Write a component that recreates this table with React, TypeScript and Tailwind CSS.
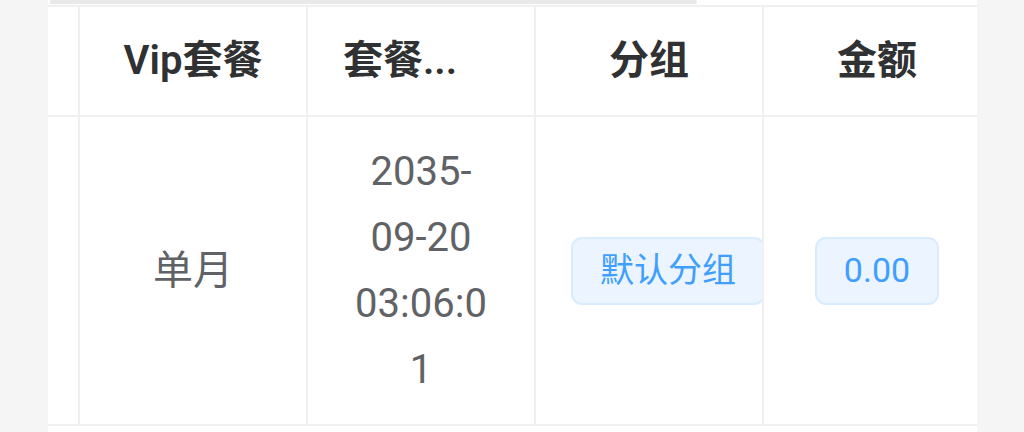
import React from "react";

const line = "border-[#f0f0f0]";

function Tag({ children }: { children: React.ReactNode }) {
  return (
    <span className="inline-flex h-[68px] shrink-0 items-center whitespace-nowrap rounded-[11px] border-2 border-[#d9ecff] bg-[#ecf5ff] px-[27px] text-[34px] text-[#409eff]">
      {children}
    </span>
  );
}

export default function App() {
  const font = { fontFamily: 'Roboto, "Noto Sans CJK SC", sans-serif' };

  return (
    <div className="flex h-[432px] w-full overflow-hidden bg-[#f5f5f5] pl-[48px]" style={font}>
      <div className="flex w-[929px] flex-col overflow-hidden bg-white">
        {/* horizontal scrollbar */}
        <div className="h-[5px] shrink-0 pl-[2px]">
          <div className="h-[4px] w-[647px] rounded-r-full bg-[#e9e9e9]" />
        </div>

        <div className={`flex w-[942px] flex-col border-t-2 ${line}`}>
          {/* header */}
          <div className={`flex h-[110px] border-b-2 ${line} text-[40px] font-semibold text-[#303133]`}>
            <div className={`w-[32px] shrink-0 border-r-2 ${line}`} />
            <div className={`flex w-[228px] shrink-0 items-center justify-center border-r-2 ${line}`}>
              Vip套餐
            </div>
            <div className={`flex w-[228px] shrink-0 items-center border-r-2 ${line} pl-[35px]`}>
              套餐...
            </div>
            <div className={`flex w-[228px] shrink-0 items-center justify-center border-r-2 ${line}`}>
              分组
            </div>
            <div className="flex w-[226px] shrink-0 items-center justify-center">金额</div>
          </div>

          {/* row */}
          <div className={`flex h-[309px] border-b-2 ${line} text-[40px] text-[#606266]`}>
            <div className={`w-[32px] shrink-0 border-r-2 ${line}`} />
            <div className={`flex w-[228px] shrink-0 items-center justify-center border-r-2 ${line}`}>
              单月
            </div>
            <div className={`flex w-[228px] shrink-0 flex-col items-center justify-center border-r-2 ${line} leading-[66px]`}>
              <span>2035-</span>
              <span>09-20</span>
              <span>03:06:0</span>
              <span>1</span>
            </div>
            <div className={`flex w-[228px] shrink-0 items-center overflow-hidden border-r-2 ${line} pl-[35px]`}>
              <Tag>默认分组</Tag>
            </div>
            <div className="flex w-[226px] shrink-0 items-center justify-center">
              <Tag>0.00</Tag>
            </div>
          </div>
        </div>
      </div>
    </div>
  );
}
